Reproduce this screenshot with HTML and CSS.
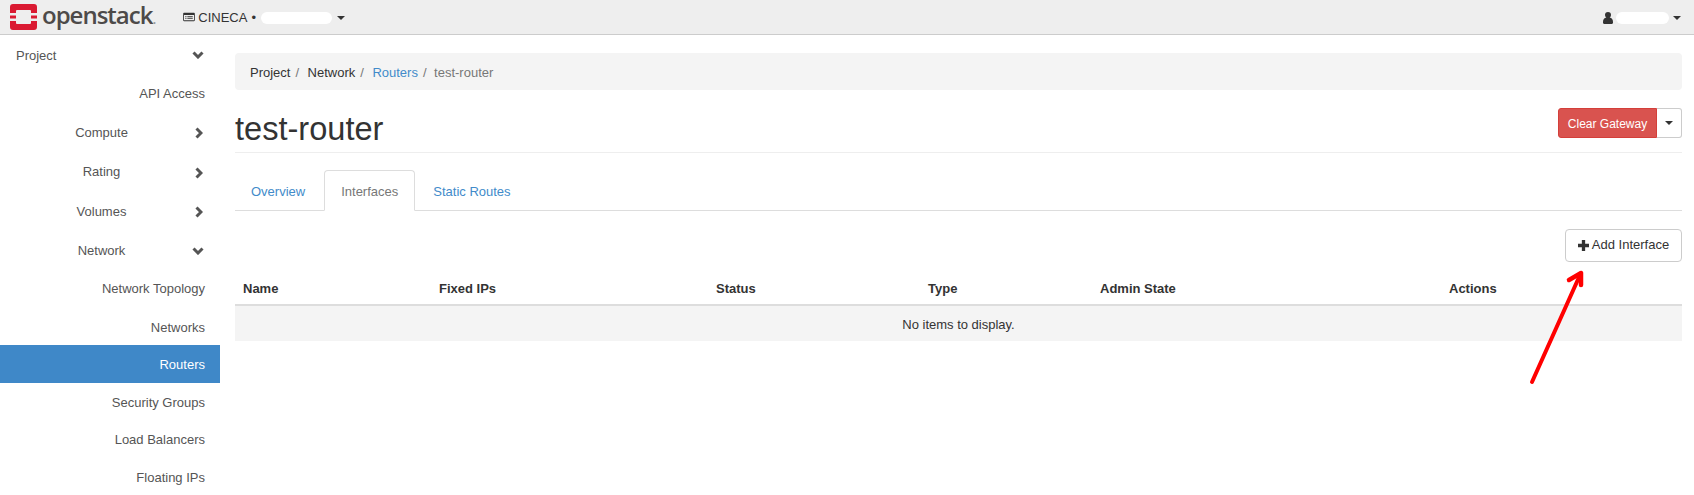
FILE: index.html
```html
<!DOCTYPE html>
<html lang="en">
<head>
<meta charset="utf-8">
<title>test-router</title>
<link rel="stylesheet" href="styles.css">
</head>
<body>
<header class="topbar">
  <svg class="logo" viewBox="0 0 27 26" width="27" height="26"><path fill="#da1a32" d="M3 0h21a3 3 0 0 1 3 3v6h-6V7a1 1 0 0 0-1-1H7a1 1 0 0 0-1 1v2H0V3a3 3 0 0 1 3-3zM0 11.500h6v3H0zM21 11.500h6v3h-6zM0 17h6v2a1 1 0 0 0 1 1h13a1 1 0 0 0 1-1v-2h6v6a3 3 0 0 1-3 3H3a3 3 0 0 1-3-3z"/></svg>
  <span class="brand">openstack<span class="brand-dot">.</span></span>
  <div class="project-picker">
    <svg class="ticon" viewBox="0 0 14 12" width="12" height="10"><path fill="#333" d="M1 1h12a1 1 0 0 1 1 1v8a1 1 0 0 1-1 1H1a1 1 0 0 1-1-1V2a1 1 0 0 1 1-1zm0 2.500V10h12V3.500zM2.500 5H4v1H2.500zm0 2H4v1H2.500zM5 5h6.500v1H5zm0 2h6.500v1H5z"/></svg>
    <span class="project-name">CINECA</span><span class="dot">•</span><span class="redact redact-project"></span><span class="caret"></span>
  </div>
  <div class="user-menu">
    <svg class="uicon" viewBox="0 0 10 12" width="10" height="12"><path fill="#333" d="M5 0a3 3 0 0 1 3 3 3 3 0 0 1-1.300 2.500C8.800 6 10 7.500 10 10v.8c0 .7-.5 1.200-1.200 1.200H1.200C.5 12 0 11.500 0 10.800V10c0-2.500 1.200-4 3.300-4.500A3 3 0 0 1 2 3a3 3 0 0 1 3-3z"/></svg>
    <span class="redact redact-user"></span><span class="caret caret-user"></span>
  </div>
</header>
<div class="layout">
  <nav class="sidebar">
    <div class="side-head side-first"><span class="side-left">Project</span><svg class="chev chev-d" viewBox="0 0 12 8" width="12" height="8"><path d="M1.500 1.500 6 6l4.500-4.500" fill="none" stroke="#555" stroke-width="3"/></svg></div>
    <div class="side-sub side-api">API Access</div>
    <div class="side-head"><span class="side-center">Compute</span><svg class="chev chev-r" viewBox="0 0 8 12" width="8" height="12"><path d="M1.500 1.500 6 6l-4.500 4.500" fill="none" stroke="#555" stroke-width="3"/></svg></div>
    <div class="side-head"><span class="side-center">Rating</span><svg class="chev chev-r" viewBox="0 0 8 12" width="8" height="12"><path d="M1.500 1.500 6 6l-4.500 4.500" fill="none" stroke="#555" stroke-width="3"/></svg></div>
    <div class="side-head"><span class="side-center">Volumes</span><svg class="chev chev-r" viewBox="0 0 8 12" width="8" height="12"><path d="M1.500 1.500 6 6l-4.500 4.500" fill="none" stroke="#555" stroke-width="3"/></svg></div>
    <div class="side-head"><span class="side-center">Network</span><svg class="chev chev-d" viewBox="0 0 12 8" width="12" height="8"><path d="M1.500 1.500 6 6l4.500-4.500" fill="none" stroke="#555" stroke-width="3"/></svg></div>
    <div class="side-sub">Network Topology</div>
    <div class="side-sub side-nets">Networks</div>
    <div class="side-sub side-low active">Routers</div>
    <div class="side-sub side-low">Security Groups</div>
    <div class="side-sub side-low">Load Balancers</div>
    <div class="side-sub side-lowest">Floating IPs</div>
  </nav>
  <main class="content">
    <ol class="crumbs">
      <li>Project<span class="sep">/</span></li>
      <li>Network<span class="sep">/</span></li>
      <li><a class="link">Routers</a><span class="sep">/</span></li>
      <li class="crumb-current">test-router</li>
    </ol>
    <div class="page-head">
      <h1>test-router</h1>
      <div class="btn-group">
        <span class="btn btn-danger">Clear Gateway</span><span class="btn btn-toggle"><span class="caret"></span></span>
      </div>
    </div>
    <ul class="tabs">
      <li class="tab"><a class="link">Overview</a></li>
      <li class="tab tab-active">Interfaces</li>
      <li class="tab"><a class="link">Static Routes</a></li>
    </ul>
    <div class="actions">
      <span class="btn btn-add"><svg class="plus" viewBox="0 0 10 10" width="11" height="11"><path fill="#333" d="M3.500 0h3v3.500H10v3H6.500V10h-3V6.500H0v-3h3.500z"/></svg>Add Interface</span>
    </div>
    <table class="data">
      <thead>
        <tr><th class="c1">Name</th><th class="c2">Fixed IPs</th><th class="c3">Status</th><th class="c4">Type</th><th class="c5">Admin State</th><th class="c6">Actions</th></tr>
      </thead>
      <tbody>
        <tr><td colspan="6">No items to display.</td></tr>
      </tbody>
    </table>
  </main>
</div>
<svg class="arrow" viewBox="0 0 70 125" width="70" height="125"><path d="M11 115 59 8" fill="none" stroke="#f00" stroke-width="4" stroke-linecap="round"/><path d="M48 13 60 6 60 18" fill="none" stroke="#f00" stroke-width="4.500" stroke-linecap="round" stroke-linejoin="round"/></svg>
</body>
</html>
```
FILE: styles.css
```css
* { box-sizing: border-box; }
html, body { margin: 0; padding: 0; }
body {
  font-family: "Liberation Sans", Arial, sans-serif;
  font-size: 13px;
  line-height: 18.571px;
  color: #333;
  background: #fff;
  height: 495px;
  overflow: hidden;
  position: relative;
}
.topbar {
  height: 35px;
  background: #eee;
  border-bottom: 1px solid #ccc;
  display: flex;
  align-items: center;
  padding-left: 10px;
  padding-right: 13px;
}
.logo { flex: none; margin-top: -1px; }
.brand {
  font-family: "Open Sans", sans-serif;
  font-size: 24px;
  font-weight: 600;
  letter-spacing: -1px;
  color: #4d4a49;
  line-height: 33px;
  margin-left: 5px;
  margin-right: 28px;
  margin-top: -1px;
  white-space: nowrap;
}
.brand-dot { color: #999; font-size: 14px; }
.project-picker { display: flex; align-items: center; padding-top: 2px; }
.ticon { margin-right: 3px; margin-top: -1px; }
.project-name { font-size: 13px; margin-right: -1px; }
.dot { margin: 0 5px; }
.redact { display: inline-block; background: #fff; border-radius: 6px; height: 12px; }
.redact-project { width: 71px; }
.redact-user { width: 53px; margin-left: 3px; }
.caret {
  display: inline-block;
  width: 0; height: 0;
  border-top: 4px solid #333;
  border-left: 4px solid transparent;
  border-right: 4px solid transparent;
}
.project-picker .caret { margin-left: 5px; }
.caret-user { margin-left: 4px; }
.user-menu { margin-left: auto; display: flex; align-items: center; padding-top: 1px; }
.layout { display: flex; align-items: flex-start; }
.sidebar { width: 220px; flex: none; color: #555; }
.side-head {
  height: 39.300px;
  display: flex;
  align-items: center;
  position: relative;
  padding-right: 15px;
}
.side-first { padding-top: 3px; }
.side-first .chev { margin-top: -2px; }
.side-left { margin-left: 16px; }
.side-center { position: absolute; left: 0; width: 203px; text-align: center; }
.chev { margin-left: auto; }
.chev-d { margin-right: 1px; }
.chev-r { margin-right: 2px; }
.side-sub {
  height: 37.300px;
  display: flex;
  align-items: center;
  justify-content: flex-end;
  padding-right: 15px;
}
.side-api { height: 39.300px; }
.side-nets { padding-top: 3px; }
.side-low { padding-top: 2px; }
.side-lowest { padding-top: 4px; }
.active { background: #3f88c8; color: #fff; height: 38px; }
.content { flex: 1; min-width: 0; padding: 18px 12px 0 15px; }
.crumbs {
  list-style: none;
  margin: 0;
  background: #f4f4f4;
  border-radius: 4px;
  height: 37px;
  display: flex;
  align-items: center;
  padding: 4px 15px 0;
}
.crumbs li { white-space: pre; }
.sep { color: #777; margin: 0 8.500px 0 5px; }
.crumb-current { color: #777; margin-left: -1px; }
.link { color: #428bca; text-decoration: none; }
.page-head {
  display: flex;
  align-items: flex-start;
  justify-content: space-between;
  height: 63px;
  padding-top: 18px;
  border-bottom: 1px solid #eee;
}
h1 { font-size: 32.600px; font-weight: 400; line-height: 37px; margin: 2px 0 0; color: #333; }
.btn-group { display: flex; }
.btn {
  display: inline-flex;
  align-items: center;
  justify-content: center;
  border: 1px solid #ccc;
  border-radius: 3px;
  font-size: 12px;
  background: #fff;
}
.btn-danger {
  width: 99px; height: 30px;
  background: #d9534f;
  border-color: #d43f3a;
  color: #fff;
  border-radius: 3px 0 0 3px;
  padding-top: 2px;
}
.btn-toggle { width: 25px; height: 30px; border-left: 0; border-radius: 0 3px 3px 0; }
.tabs {
  list-style: none;
  margin: 17px 0 0;
  padding: 0;
  display: flex;
  height: 41px;
  border-bottom: 1px solid #ddd;
}
.tab { height: 41px; display: flex; align-items: center; padding: 4px 16px 0; margin-right: 2px; }
.tab:first-child { margin-right: 3px; }
.tab-active {
  color: #777;
  background: #fff;
  border: 1px solid #ddd;
  border-bottom-color: #fff;
  border-radius: 4px 4px 0 0;
  padding: 4px 16px 0;
}
.actions { display: flex; justify-content: flex-end; margin-top: 18px; }
.btn-add { width: 117px; height: 33px; font-size: 13px; border-radius: 4px; }
.plus { margin-right: 3px; margin-top: -1px; }
.data { width: 100%; border-collapse: collapse; table-layout: fixed; margin-top: 9px; }
.data th {
  text-align: left;
  font-weight: 700;
  height: 34px;
  padding: 3px 8px 0;
  border-bottom: 2px solid #ddd;
}
.data td { background: #f4f4f4; height: 36px; text-align: center; padding: 3px 0 0; }
.c1 { width: 196px; }
.c2 { width: 277px; }
.c3 { width: 212px; }
.c4 { width: 172px; }
.c5 { width: 349px; }
.arrow { position: absolute; left: 1521px; top: 267px; }
```
